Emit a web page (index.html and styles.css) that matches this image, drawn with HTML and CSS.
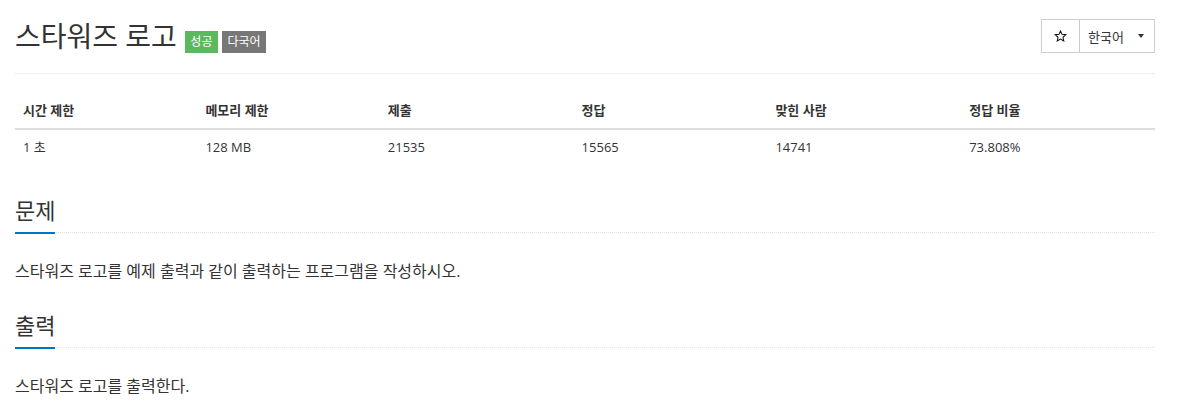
FILE: index.html
```html
<!DOCTYPE html>
<html lang="ko">
<head>
<meta charset="utf-8">
<title>스타워즈 로고</title>
<link rel="stylesheet" href="styles.css">
</head>
<body>
<div class="container">
  <div class="page-header">
    <h1 class="title-row">
      <span class="problem-title">스타워즈 로고</span>
      <span class="label label-success">성공</span>
      <span class="label label-gray">다국어</span>
    </h1>
    <div class="btn-group">
      <button class="btn btn-star" type="button" aria-label="즐겨찾기">
        <svg width="13" height="12" viewBox="0 0 24 23" aria-hidden="true"><path d="M12 1.8l2.9 6.6 7.2.7-5.4 4.8 1.6 7.1L12 17.3 5.7 21l1.6-7.1-5.4-4.8 7.2-.7z" fill="none" stroke="#111" stroke-width="2" stroke-linejoin="miter"/></svg>
      </button>
      <button class="btn btn-lang" type="button">한국어<span class="caret"></span></button>
    </div>
  </div>

  <table class="info-table">
    <colgroup>
      <col class="w16"><col class="w16"><col class="w17"><col class="w17"><col class="w17"><col class="w17">
    </colgroup>
    <thead>
      <tr><th>시간 제한</th><th>메모리 제한</th><th>제출</th><th>정답</th><th>맞힌 사람</th><th>정답 비율</th></tr>
    </thead>
    <tbody>
      <tr><td>1 초</td><td>128 MB</td><td>21535</td><td>15565</td><td>14741</td><td>73.808%</td></tr>
    </tbody>
  </table>

  <section class="problem-section">
    <div class="headline"><h2>문제</h2></div>
    <p class="problem-text">스타워즈 로고를 예제 출력과 같이 출력하는 프로그램을 작성하시오.</p>
  </section>

  <section class="problem-section">
    <div class="headline"><h2>출력</h2></div>
    <p class="problem-text">스타워즈 로고를 출력한다.</p>
  </section>
</div>
</body>
</html>
```

FILE: styles.css
```css
html, body {
  margin: 0;
  padding: 0;
  background: #fff;
}

body {
  font-family: "Open Sans", "Noto Sans CJK KR", sans-serif;
  color: #333;
  font-size: 14px;
}

.container {
  width: 1140px;
  margin-left: 15px;
  padding-top: 19px;
}

.page-header {
  display: flex;
  justify-content: space-between;
  align-items: flex-start;
  padding-bottom: 20px;
  border-bottom: 1px solid #eee;
}

.title-row {
  display: flex;
  align-items: flex-start;
  margin: 0;
  font-weight: normal;
}

.problem-title {
  font-size: 28px;
  line-height: 34px;
  color: #333;
}

.label {
  margin-top: 12px;
  font-size: 12px;
  line-height: 22px;
  height: 22px;
  padding: 0 5.5px;
  color: #fff;
  font-weight: normal;
}

.label-success {
  background: #5cb85c;
  margin-left: 8px;
}

.label-gray {
  background: #777;
  margin-left: 4px;
}

.btn-group {
  display: flex;
}

.btn {
  box-sizing: border-box;
  height: 34px;
  display: flex;
  align-items: center;
  background: #fff;
  border: 1px solid #ccc;
  font-family: inherit;
  color: #333;
  font-size: 13px;
  margin: 0;
  cursor: pointer;
}

.btn-star {
  padding: 0 12px;
}

.btn-lang {
  margin-left: -1px;
  padding: 0 10px 0 8px;
}

.caret {
  display: inline-block;
  width: 0;
  height: 0;
  margin-left: 14px;
  border-top: 4px solid #333;
  border-left: 3px solid transparent;
  border-right: 3px solid transparent;
}

.info-table {
  width: 100%;
  table-layout: fixed;
  border-collapse: collapse;
  margin: 19px 0 20px;
  font-size: 13px;
}

.w16 { width: 16%; }
.w17 { width: 17%; }

.info-table th,
.info-table td {
  text-align: left;
  padding: 8px;
  line-height: 19px;
}

.info-table th {
  font-weight: bold;
  border-bottom: 2px solid #ddd;
}

.problem-section {
  padding-top: 12px;
}

.headline {
  display: flex;
  border-bottom: 1px dotted #dde3ea;
}

.headline h2 {
  margin: 0 0 -2px;
  font-size: 22px;
  line-height: 26px;
  font-weight: normal;
  color: #333;
  padding-bottom: 9px;
  border-bottom: 2px solid #0076c0;
}

.problem-text {
  margin: 26px 0 17px;
  font-size: 16px;
  line-height: 24px;
  color: #333;
}
```
